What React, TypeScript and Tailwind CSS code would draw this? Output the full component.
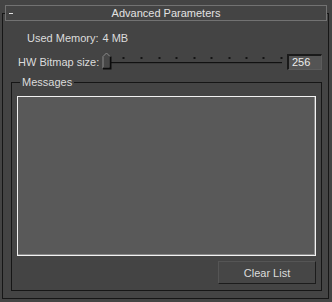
import React from "react";

export default function App() {
  const ticks = [123, 141, 159, 176, 194, 211, 229, 246, 263, 281];
  return (
    <div
      className="w-[332px] h-[302px] bg-[#444444] overflow-hidden text-[#dcdcdc]"
      style={{ fontFamily: '"Liberation Sans", Arial, sans-serif' }}
    >
      <div className="h-[13px]" />
      <div className="ml-[2px] w-[327px] h-[286px] border border-[#161616]">
        {/* header */}
        <div className="-mt-[9px] ml-[2px] w-[322px] h-[16px] border border-[#727272] bg-[#444444] relative flex items-center justify-center">
          <div className="absolute left-[3px] top-[7px] w-[4px] h-[1px] bg-[#e0e0e0]" />
          <span className="text-[11px] leading-[14px] text-[#e2e2e2] whitespace-nowrap">Advanced Parameters</span>
        </div>
        {/* used memory */}
        <div className="mt-[10px] ml-[24px] h-[14px] flex items-center text-[11px] leading-[14px] whitespace-nowrap">
          <span>Used Memory:</span>
          <span className="ml-[4px]">4 MB</span>
        </div>
        {/* hw bitmap */}
        <div className="mt-[7px] ml-[15px] h-[18px] flex items-start">
          <span className="w-[84px] text-[11px] leading-[14px] mt-[3px] whitespace-nowrap">HW Bitmap size:</span>
          <svg width="182" height="18" viewBox="0 0 182 18" className="block shrink-0">
            <rect x="8" y="10" width="172" height="1" fill="#111111" />
            <rect x="8" y="11" width="172" height="1" fill="#3a3a3a" />
            {ticks.map((t) => (
              <rect key={t} x={t - 102 - 0.5} y={5} width={2} height={2} fill="#141414" />
            ))}
            <polygon points="4.5,1 8,4.5 8,16 1,16 1,4.5" fill="#474747" stroke="#8a8a8a" strokeWidth="1" />
            <polyline points="8.5,4.5 8.5,16.5 1,16.5" fill="none" stroke="#0c0c0c" strokeWidth="2" />
          </svg>
          <div className="ml-[3px] mt-[2px] w-[35px] h-[16px] shrink-0 bg-[#545454] border-t-2 border-l-2 border-[#1a1a1a] border-b border-r border-b-[#5c5c5c] border-r-[#5c5c5c] text-[11px] leading-[12px] pl-[3px] text-[#ececec]">
            256
          </div>
        </div>
        {/* messages group */}
        <div className="mt-[12px] ml-[8px] w-[311px] h-[209px] border border-[#161616] relative">
          <span className="absolute -top-[8px] left-[8px] px-[2px] bg-[#444444] text-[11px] leading-[14px] whitespace-nowrap">
            Messages
          </span>
          <div className="mt-[13px] ml-[5px] w-[299px] h-[160px] border border-[#f2f2f2] bg-[#595959]">
            <div className="w-full h-full border-r border-b border-[#8a8a8a]" />
          </div>
          <button className="mt-[5px] ml-[206px] w-[98px] h-[23px] bg-[#464646] border border-t-[#555555] border-l-[#555555] border-b-[#1c1c1c] border-r-[#1c1c1c] text-[11px] leading-[14px] text-[#dcdcdc] flex items-center justify-center whitespace-nowrap">
            Clear List
          </button>
        </div>
      </div>
    </div>
  );
}
